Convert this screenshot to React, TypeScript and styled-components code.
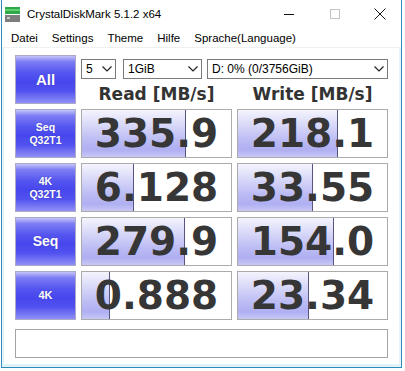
import React from 'react';
import styled, { createGlobalStyle } from 'styled-components';

const Global = createGlobalStyle`
  html, body { margin: 0; padding: 0; background: #ffffff; }
  body { width: 405px; height: 371px; overflow: hidden; font-family: "Liberation Sans", Arial, sans-serif; }
`;

const Window = styled.div`
  margin-left: 1px;
  width: 401px;
  height: 368px;
  box-sizing: border-box;
  border: 1px solid #2f8cb9;
  border-top: none;
  background: #ffffff;
  display: flex;
  flex-direction: column;
`;

const TitleBar = styled.div`
  height: 28px;
  flex-shrink: 0;
  display: flex;
  align-items: center;
`;

const IconWrap = styled.div`
  margin-left: 3px;
  width: 15px;
  height: 15px;
  display: flex;
`;

const Title = styled.span`
  margin-left: 7px;
  flex: 1;
  font-size: 11.5px;
  color: #000;
  white-space: nowrap;
`;

const Controls = styled.div`
  display: flex;
  height: 28px;
`;

const CtrlButton = styled.div<{ $w: number }>`
  width: ${p => p.$w}px;
  height: 28px;
  display: flex;
  align-items: center;
  justify-content: center;
`;

const MenuBar = styled.div`
  height: 19px;
  flex-shrink: 0;
  display: flex;
  align-items: center;
  padding-left: 2px;
  border-bottom: 1px solid #f0f0f0;
`;

const MenuItem = styled.span`
  padding: 0 7px;
  font-size: 11.5px;
  color: #000;
  white-space: nowrap;
`;

const Client = styled.div`
  flex: 1;
  padding: 7px 0 0 13px;
  box-shadow: inset 2px 0 0 #e6f4fa, inset -2px 0 0 #e6f4fa, inset 0 -3px 0 #e1f2fa;
`;

const Grid = styled.div`
  display: grid;
  grid-template-columns: 61px 151px 151px;
  grid-template-rows: repeat(5, 49px);
  column-gap: 5px;
  row-gap: 5px;
`;

const Tile = styled.div<{ $size: number }>`
  box-sizing: border-box;
  border: 1px solid #a9a9c9;
  background: linear-gradient(to bottom, #c4c4fa 0%, #7e7ef4 12%, #5656f0 35%, #4646ee 55%, #5252f0 75%, #9090f6 100%);
  color: #ffffff;
  display: flex;
  flex-direction: column;
  align-items: center;
  justify-content: center;
  font-weight: bold;
  font-size: ${p => p.$size}px;
  line-height: ${p => Math.round(p.$size * 1.22)}px;
  text-shadow: 0 0 1px rgba(40, 40, 120, 0.6);
  text-align: center;
`;

const HeaderCell = styled.div`
  grid-column: 2 / span 2;
  display: flex;
  flex-direction: column;
`;

const SelectRow = styled.div`
  margin-top: 4px;
  display: flex;
  height: 20px;
`;

const Select = styled.div<{ $w: number; $gap: number }>`
  width: ${p => p.$w}px;
  margin-left: ${p => p.$gap}px;
  box-sizing: border-box;
  height: 20px;
  border: 1px solid #7a7a7a;
  background: #fff;
  display: flex;
  align-items: center;
  padding: 0 3px 0 4px;
  font-size: 12px;
  color: #000;
`;

const SelectText = styled.span`
  flex: 1;
  white-space: nowrap;
`;

const HeadRow = styled.div`
  margin-top: 5px;
  display: grid;
  grid-template-columns: 151px 151px;
  column-gap: 5px;
`;

const HeadLabel = styled.div`
  text-align: center;
  font-family: "DejaVu Sans", Verdana, sans-serif;
  font-weight: bold;
  font-size: 17px;
  line-height: 20px;
  color: #333333;
  white-space: nowrap;
`;

const ValueBox = styled.div`
  position: relative;
  box-sizing: border-box;
  border: 1px solid #ababab;
  background: #ffffff;
  display: flex;
  align-items: center;
  justify-content: center;
  overflow: hidden;
`;

const Bar = styled.div`
  position: absolute;
  left: 0;
  top: 0;
  bottom: 0;
  box-sizing: border-box;
  border-right: 1px solid #55557f;
  background: linear-gradient(to bottom, #f4f4fd 0%, #dadaf9 30%, #bbbbf4 65%, #afaff2 85%, #c8c8f6 100%);
`;

const Value = styled.span`
  position: relative;
  font-family: "DejaVu Sans", Verdana, sans-serif;
  font-weight: bold;
  font-size: 39px;
  line-height: 44px;
  color: #363636;
  white-space: nowrap;
`;

const Comment = styled.div`
  margin-top: 9px;
  width: 373px;
  height: 29px;
  box-sizing: border-box;
  border: 1px solid #a5a5a5;
  background: #fff;
`;

const Chevron = () => (
  <svg width="10" height="6" viewBox="0 0 10 6">
    <polyline points="0.5,0.5 5,5 9.5,0.5" fill="none" stroke="#222" strokeWidth="1.2" />
  </svg>
);

const AppIcon = () => (
  <IconWrap>
    <svg width="15" height="15" viewBox="0 0 15 15">
      <rect x="0" y="0" width="15" height="7" fill="#2fa84a" />
      <rect x="0" y="2" width="15" height="2" fill="#5fcf6e" />
      <rect x="0" y="8" width="15" height="7" fill="#7d7d7d" />
      <rect x="2" y="10" width="3" height="2" fill="#c8c8c8" />
    </svg>
  </IconWrap>
);

type Row = { label: string[]; size: number; read: string; rw: number; write: string; ww: number };

const rows: Row[] = [
  { label: ['Seq', 'Q32T1'], size: 10.5, read: '335.9', rw: 104, write: '218.1', ww: 100 },
  { label: ['4K', 'Q32T1'], size: 10.5, read: '6.128', rw: 52, write: '33.55', ww: 75 },
  { label: ['Seq'], size: 14, read: '279.9', rw: 103, write: '154.0', ww: 96 },
  { label: ['4K'], size: 11, read: '0.888', rw: 28, write: '23.34', ww: 71 },
];

const menus = ['Datei', 'Settings', 'Theme', 'Hilfe', 'Sprache(Language)'];

export default function App() {
  return (
    <>
      <Global />
      <Window>
        <TitleBar>
          <AppIcon />
          <Title>CrystalDiskMark 5.1.2 x64</Title>
          <Controls>
            <CtrlButton $w={46}>
              <svg width="10" height="1"><rect width="10" height="1" fill="#111" /></svg>
            </CtrlButton>
            <CtrlButton $w={46}>
              <svg width="10" height="10"><rect x="0.5" y="0.5" width="9" height="9" fill="none" stroke="#c4c4c4" /></svg>
            </CtrlButton>
            <CtrlButton $w={43}>
              <svg width="12" height="12"><path d="M0.5 0.5 L11.5 11.5 M11.5 0.5 L0.5 11.5" stroke="#111" strokeWidth="1" /></svg>
            </CtrlButton>
          </Controls>
        </TitleBar>
        <MenuBar>
          {menus.map(m => (
            <MenuItem key={m}>{m}</MenuItem>
          ))}
        </MenuBar>
        <Client>
          <Grid>
            <Tile $size={15}>All</Tile>
            <HeaderCell>
              <SelectRow>
                <Select $w={35} $gap={0}>
                  <SelectText>5</SelectText>
                  <Chevron />
                </Select>
                <Select $w={79} $gap={7}>
                  <SelectText>1GiB</SelectText>
                  <Chevron />
                </Select>
                <Select $w={181} $gap={5}>
                  <SelectText>D: 0% (0/3756GiB)</SelectText>
                  <Chevron />
                </Select>
              </SelectRow>
              <HeadRow>
                <HeadLabel>Read [MB/s]</HeadLabel>
                <HeadLabel>Write [MB/s]</HeadLabel>
              </HeadRow>
            </HeaderCell>
            {rows.map((r, i) => (
              <React.Fragment key={i}>
                <Tile $size={r.size}>
                  {r.label.map(l => (
                    <span key={l}>{l}</span>
                  ))}
                </Tile>
                <ValueBox>
                  <Bar style={{ width: r.rw }} />
                  <Value>{r.read}</Value>
                </ValueBox>
                <ValueBox>
                  <Bar style={{ width: r.ww }} />
                  <Value>{r.write}</Value>
                </ValueBox>
              </React.Fragment>
            ))}
          </Grid>
          <Comment />
        </Client>
      </Window>
    </>
  );
}
